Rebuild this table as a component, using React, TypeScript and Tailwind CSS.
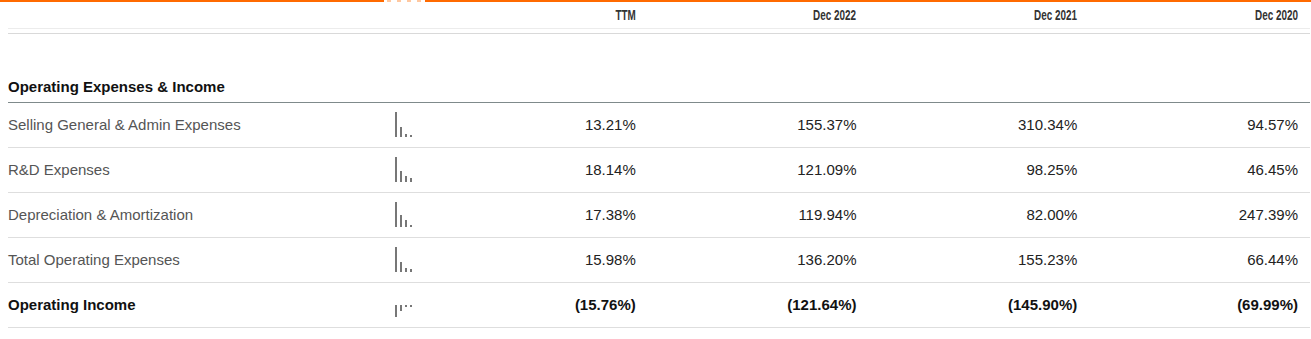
import React from "react";

type Row = {
  label: string;
  values: string[];
  bars: number[];
  bold?: boolean;
};

const periods = ["TTM", "Dec 2022", "Dec 2021", "Dec 2020"];

const rows: Row[] = [
  {
    label: "Selling General & Admin Expenses",
    values: ["13.21%", "155.37%", "310.34%", "94.57%"],
    bars: [25, 10, 3, 2],
  },
  {
    label: "R&D Expenses",
    values: ["18.14%", "121.09%", "98.25%", "46.45%"],
    bars: [25, 11, 6, 4],
  },
  {
    label: "Depreciation & Amortization",
    values: ["17.38%", "119.94%", "82.00%", "247.39%"],
    bars: [25, 12, 7, 2],
  },
  {
    label: "Total Operating Expenses",
    values: ["15.98%", "136.20%", "155.23%", "66.44%"],
    bars: [25, 10, 4, 3],
  },
  {
    label: "Operating Income",
    values: ["(15.76%)", "(121.64%)", "(145.90%)", "(69.99%)"],
    bars: [-12, -6, -2, -2],
    bold: true,
  },
];

function Sparkline({ bars }: { bars: number[] }) {
  const negative = bars.every((b) => b < 0);
  return (
    <svg width="18" height="26" viewBox="0 0 18 26" className="block" shapeRendering="crispEdges">
      {bars.map((b, i) => {
        const h = Math.abs(b);
        const y = negative ? 13 : 25 - h;
        return <rect key={i} x={i * 5} y={y} width="2" height={h} fill="#777" />;
      })}
    </svg>
  );
}

export default function App() {
  return (
    <div className="w-full h-[339px] bg-white font-['Liberation_Sans',Arial,sans-serif] overflow-hidden">
      {/* orange top rule with handle */}
      <div className="flex h-[2px]">
        <div className="w-[384px] bg-[#ff6a00]" />
        <div className="w-[41px] flex items-start gap-[6px] px-[3px]">
          <div className="w-[4px] h-[2px] bg-[#ffc8a0]" />
          <div className="w-[4px] h-[2px] bg-[#ffc8a0]" />
          <div className="w-[4px] h-[2px] bg-[#ffc8a0]" />
          <div className="w-[4px] h-[2px] bg-[#ffc8a0]" />
        </div>
        <div className="flex-1 bg-[#ff6a00]" />
      </div>

      <div className="pl-2 w-[1310px]">
        {/* column headings */}
        <div className="grid grid-cols-[419px_repeat(4,220.75px)] h-[26px] items-center">
          <div />
          {periods.map((p) => (
            <div key={p} className="text-right pr-3">
              <span className="inline-block origin-right scale-x-[0.66] text-[15px] font-bold text-[#333] leading-none">
                {p}
              </span>
            </div>
          ))}
        </div>
        <div className="border-t border-[#ececec]" />
        <div className="h-[4px]" />
        <div className="border-t border-[#d9d9d9]" />

        {/* section title */}
        <div className="mt-[43px] h-[26px] leading-[20px] pb-[6px] border-b border-[#7f8a8b] text-[15px] font-bold text-[#111]">
          Operating Expenses &amp; Income
        </div>

        {rows.map((r) => (
          <div
            key={r.label}
            className={`grid grid-cols-[387px_32px_repeat(4,220.75px)] h-[45px] items-center border-b border-[#dedede] text-[15px] ${
              r.bold ? "font-bold text-[#111]" : "text-[#222]"
            }`}
          >
            <div className={r.bold ? "" : "text-[#555]"}>{r.label}</div>
            <div>
              <Sparkline bars={r.bars} />
            </div>
            {r.values.map((v, i) => (
              <div key={i} className="text-right pr-3">
                {v}
              </div>
            ))}
          </div>
        ))}
      </div>
    </div>
  );
}
